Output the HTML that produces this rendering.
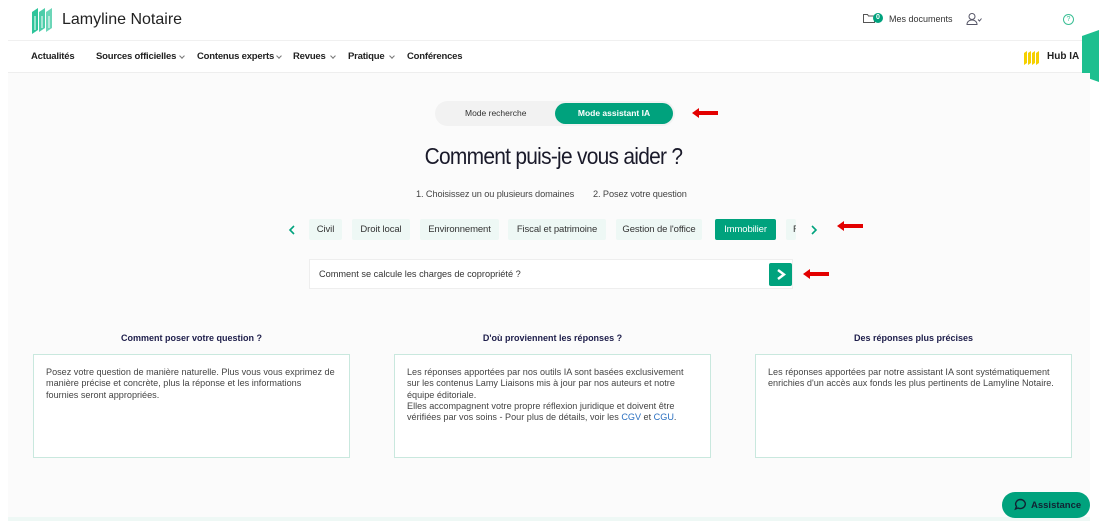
<!DOCTYPE html>
<html><head><meta charset="utf-8"><style>
*{box-sizing:border-box;margin:0;padding:0}
body{width:1099px;height:521px;overflow:hidden;background:#fff;font-family:"Liberation Sans",sans-serif;color:#222;position:relative}
.abs{position:absolute}
.nav span{position:absolute;top:51px;font-size:9.5px;font-weight:bold;color:#222;letter-spacing:-0.2px}
.chev{display:inline-block;width:4px;height:4px;border-right:1px solid #777;border-bottom:1px solid #777;transform:rotate(45deg);position:absolute;top:54px}
.main{position:absolute;left:8px;top:73px;width:1082px;height:444px;background:#fbfbfb}
.chip{position:absolute;top:219px;height:21px;background:#eef8f5;font-size:9.5px;color:#333;line-height:21px;text-align:center;border-radius:2px;letter-spacing:-0.1px}
.card{position:absolute;top:354px;width:317px;height:104px;border:1px solid #c9e8de;background:#fff;padding:12px 12px;font-size:9.1px;line-height:11.3px;color:#444}
.ct{position:absolute;top:333px;font-size:9px;font-weight:bold;color:#1d1d4a;text-align:center;width:317px}
</style></head><body>
<svg class="abs" style="left:30px;top:6px" width="26" height="28" viewBox="0 0 26 28">
<g fill="#2ec49a"><path d="M2 6l6-4v22l-6 4z"/><path d="M9 6l6-4v20l-6 4z" opacity=".85"/><path d="M16 6l6-4v20l-6 4z" opacity=".7"/></g>
<g fill="none" stroke="#fff" stroke-width="1"><path d="M5 10v14M12 10v12M19 10v12"/></g></svg>
<div class="abs" style="left:62px;top:11px;font-size:16px;color:#222">Lamyline Notaire</div>
<svg class="abs" style="left:863px;top:13px" width="12" height="10"><path d="M0.5 1.5h4l1 1.5h6v6.5h-11z" fill="none" stroke="#555" stroke-width="1"/></svg>
<div class="abs" style="left:873px;top:13px;width:10px;height:10px;border-radius:50%;background:#00a27d;color:#fff;font-size:7px;font-weight:bold;text-align:center;line-height:10px">0</div>
<div class="abs" style="left:889px;top:14px;font-size:9px;color:#333">Mes documents</div>
<svg class="abs" style="left:966px;top:13px" width="16" height="12"><circle cx="6" cy="3.5" r="3" fill="none" stroke="#556" stroke-width="1"/><path d="M1 11.5c0-3 2.5-4.5 5-4.5s5 1.5 5 4.5z" fill="none" stroke="#556"/><path d="M12 6.5l1.5 1.5 2-2.5" fill="none" stroke="#556"/></svg>
<div class="abs" style="left:1063px;top:14px;width:11px;height:11px;border:1px solid #3bbf95;border-radius:50%;color:#3bbf95;font-size:7px;text-align:center;line-height:9px">?</div>
<div class="abs" style="left:8px;top:40px;width:1082px;height:1px;background:#f0f0f0"></div>
<div class="abs" style="left:8px;top:72px;width:1082px;height:1px;background:#eee"></div>
<div class="nav">
<span style="left:31px">Actualités</span>
<span style="left:96px">Sources officielles</span><i class="chev" style="left:180px"></i>
<span style="left:197px">Contenus experts</span><i class="chev" style="left:277px"></i>
<span style="left:293px">Revues</span><i class="chev" style="left:331px"></i>
<span style="left:348px">Pratique</span><i class="chev" style="left:390px"></i>
<span style="left:407px">Conférences</span>
</div>
<svg class="abs" style="left:1023px;top:49px" width="17" height="16"><g fill="#f5d000"><path d="M1 4l3-2v12l-3 2z"/><path d="M5 4l3-2v12l-3 2z"/><path d="M9 4l3-2v12l-3 2z"/><path d="M13 4l3-2v12l-3 2z"/></g></svg>
<div class="abs" style="left:1047px;top:51px;font-size:10px;font-weight:bold;color:#222">Hub IA</div>
<svg class="abs" style="left:1082px;top:30px" width="17" height="52"><path d="M0 6l17-6v52l-17-6z" fill="#1dbf8f"/></svg>
<div class="main"></div>
<div class="abs" style="left:435px;top:101px;width:240px;height:25px;border-radius:13px;background:#f2f2f2"></div>
<div class="abs" style="left:465px;top:108px;font-size:8.5px;color:#333">Mode recherche</div>
<div class="abs" style="left:555px;top:103px;width:118px;height:21px;border-radius:11px;background:#00a27d;color:#fff;font-size:8.5px;font-weight:bold;text-align:center;line-height:21px">Mode assistant IA</div>
<svg class="abs" style="left:692px;top:108px" width="26" height="10"><path d="M0 5l7-5v3h19v4h-19v3z" fill="#e30000"/></svg>
<div class="abs" style="left:0;top:143px;width:1107px;text-align:center;font-size:23px;color:#1a1a2a;letter-spacing:-0.8px;transform:scaleX(0.91);transform-origin:553px 0">Comment puis-je vous aider ?</div>
<div class="abs" style="left:416px;top:189px;font-size:9.2px;color:#444;letter-spacing:-0.1px">1. Choisissez un ou plusieurs domaines</div>
<div class="abs" style="left:593px;top:189px;font-size:9.2px;color:#444;letter-spacing:-0.1px">2. Posez votre question</div>
<svg class="abs" style="left:288px;top:225px" width="8" height="10"><path d="M6 1l-4 4 4 4" fill="none" stroke="#00a27d" stroke-width="1.6"/></svg>
<div class="chip" style="left:309px;width:33px">Civil</div>
<div class="chip" style="left:352px;width:58px">Droit local</div>
<div class="chip" style="left:420px;width:79px">Environnement</div>
<div class="chip" style="left:508px;width:98px">Fiscal et patrimoine</div>
<div class="chip" style="left:616px;width:86px">Gestion de l'office</div>
<div class="chip" style="left:715px;width:61px;background:#00a27d;color:#fff">Immobilier</div>
<div class="chip" style="left:786px;width:10px;text-align:left;padding-left:7px;overflow:hidden">F</div>
<svg class="abs" style="left:810px;top:225px" width="8" height="10"><path d="M2 1l4 4-4 4" fill="none" stroke="#00a27d" stroke-width="1.6"/></svg>
<svg class="abs" style="left:837px;top:221px" width="26" height="10"><path d="M0 5l7-5v3h19v4h-19v3z" fill="#e30000"/></svg>
<div class="abs" style="left:309px;top:259px;width:484px;height:30px;background:#fff;border:1px solid #eee"></div>
<div class="abs" style="left:319px;top:269px;font-size:9.2px;color:#333">Comment se calcule les charges de copropriété ?</div>
<div class="abs" style="left:769px;top:263px;width:23px;height:23px;background:#00a27d;border-radius:2px"></div>
<svg class="abs" style="left:775px;top:268px" width="12" height="13"><path d="M3 2l6 4.5-6 4.5" fill="none" stroke="#fff" stroke-width="2.4"/></svg>
<svg class="abs" style="left:803px;top:269px" width="26" height="10"><path d="M0 5l7-5v3h19v4h-19v3z" fill="#e30000"/></svg>
<div class="ct" style="left:33px">Comment poser votre question ?</div>
<div class="ct" style="left:394px">D'où proviennent les réponses ?</div>
<div class="ct" style="left:755px">Des réponses plus précises</div>
<div class="card" style="left:33px">Posez votre question de manière naturelle. Plus vous vous exprimez de manière précise et concrète, plus la réponse et les informations<br>fournies seront appropriées.</div>
<div class="card" style="left:394px">Les réponses apportées par nos outils IA sont basées exclusivement sur les contenus Lamy Liaisons mis à jour par nos auteurs et notre<br>équipe éditoriale.<br>Elles accompagnent votre propre réflexion juridique et doivent être vérifiées par vos soins - Pour plus de détails, voir les <span style="color:#2a6fc0">CGV</span> et <span style="color:#2a6fc0">CGU</span>.</div>
<div class="card" style="left:755px">Les réponses apportées par notre assistant IA sont systématiquement enrichies d'un accès aux fonds les plus pertinents de Lamyline Notaire.</div>
<div class="abs" style="left:8px;top:517px;width:1082px;height:4px;background:#eef8f5"></div>
<div class="abs" style="left:1002px;top:492px;width:88px;height:26px;border-radius:13px;background:#00a27d"></div>
<svg class="abs" style="left:1014px;top:498px" width="13" height="13"><path d="M6.5 1.5a5 4.5 0 1 1-2.5 8.5l-2.5 1 1-2.5a5 4.5 0 0 1 4-7z" fill="none" stroke="#123" stroke-width="1.4"/></svg>
<div class="abs" style="left:1031px;top:500px;font-size:9.5px;font-weight:bold;color:#123">Assistance</div>
</body></html>
